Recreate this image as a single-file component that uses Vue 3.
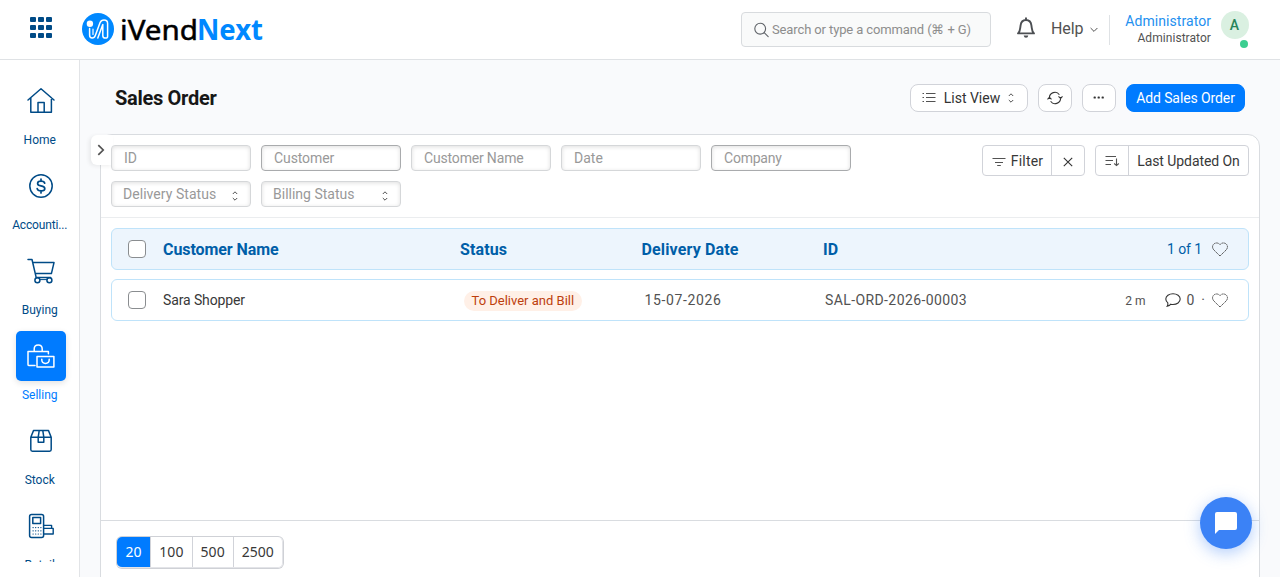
<script setup>
const modules = [
  { name: 'Home', icon: 'home', ls: 0 },
  { name: 'Accounti...', icon: 'coin', ls: -0.15 },
  { name: 'Buying', icon: 'cart', ls: 0 },
  { name: 'Selling', icon: 'bags', ls: 0, active: true },
  { name: 'Stock', icon: 'box', ls: 0 },
  { name: 'Retail', icon: 'pos', ls: 0.1 },
]
const fields = [
  { label: 'ID' },
  { label: 'Customer', link: true, ls: -0.1 },
  { label: 'Customer Name', ls: -0.17 },
  { label: 'Date' },
  { label: 'Company', link: true, ls: -0.22 },
  { label: 'Delivery Status', select: true, ls: 0.05 },
  { label: 'Billing Status', select: true },
]
const sizes = ['20', '100', '500', '2500']
const px = (n) => ({ letterSpacing: (n || 0) + 'px' })
</script>

<template>
  <div class="app">
    <header class="topbar">
      <div class="grid-icon"><i v-for="n in 9" :key="n"></i></div>
      <svg class="logo" width="190" height="40" viewBox="0 0 190 40">
        <circle cx="16" cy="16" r="16" fill="#0088ff" />
        <circle cx="7.9" cy="10.8" r="3.2" fill="#fff" />
        <path d="M7.6 15.4V22Q7.6 25 10.2 25Q12.4 25 13.4 22.3L18 9.8Q19.2 7 22 7Q25.6 7 25.6 10.4V23.4Q25.6 25 23.4 25Q20.8 25 20.8 22.4V11.6L15.8 25" fill="none" stroke="#fff" stroke-width="1.5" stroke-linecap="round" stroke-linejoin="round" />
        <path d="M11 16V21.4" fill="none" stroke="#fff" stroke-width="1.2" stroke-linecap="round" />
        <text x="38" y="26.6" class="logo-a" textLength="78" lengthAdjust="spacingAndGlyphs">iVend</text>
        <text x="115" y="26.6" class="logo-b" textLength="66" lengthAdjust="spacingAndGlyphs">Next</text>
      </svg>
      <div class="search">
        <svg width="16" height="16" viewBox="0 0 16 16" fill="none" stroke="#5f6368" stroke-width="1.1"><circle cx="6.2" cy="6.7" r="5.4" /><path d="M10.2 10.6L14.2 14.6" stroke-linecap="round" /></svg>
        <span>Search or type a command (⌘ + G)</span>
      </div>
      <svg class="bell" width="20" height="22" viewBox="0 0 20 22" fill="none" stroke="#4c4f53" stroke-width="1.9"><path d="M10 .6V3M2 16.4H18C16.4 15 16 13.4 15.8 11.2L15.4 8.4C15 5 12.8 3 10 3S5 5 4.6 8.4L4.2 11.2C4 13.4 3.6 15 2 16.4Z" stroke-linejoin="round" /><path d="M7.7 18.5H12.3Q12 20.8 10 20.8T7.7 18.5Z" fill="#4c4f53" stroke="none" /></svg>
      <span class="help">Help</span>
      <svg class="chev" width="8" height="6" viewBox="0 0 8 6" fill="none" stroke="#525252"><path d="M.6 1L4 4.4L7.4 1" /></svg>
      <div class="sep"></div>
      <div class="user"><div class="u1">Administrator</div><div class="u2">Administrator</div></div>
      <div class="avatar">A<i class="online"></i></div>
    </header>

    <div class="body">
      <aside class="side">
        <div class="side-scroll">
          <div v-for="m in modules" :key="m.name" class="mod" :class="{ active: m.active }">
            <div class="mod-icon">
              <svg width="28" height="28" viewBox="0 0 28 28" fill="none" stroke="currentColor" stroke-width="1.5" stroke-linejoin="round" stroke-linecap="round">
                <g v-if="m.icon === 'home'"><path d="M1 13L14 1.8L27 13M3.8 10.8V25.2H24.4V10.8M11 25V15.4H17.2V25" /></g>
                <g v-if="m.icon === 'coin'"><circle cx="14" cy="14" r="11.2" /><path d="M17.7 11.2Q17.2 9.2 14 9.2Q10.6 9.2 10.6 11.4Q10.6 13.3 14 13.9Q17.8 14.6 17.8 16.7Q17.8 18.9 14.2 18.9Q10.6 18.9 10.2 16.7M14 7V9.2M14 18.9V21" stroke-width="1.7" /></g>
                <g v-if="m.icon === 'cart'"><path d="M1 2.5H5L9.2 20.6H23.6M6 5.6H27L24.4 16.6H8.4" /><circle cx="10.4" cy="23.2" r="2.5" /><circle cx="22.4" cy="23.2" r="2.5" /><path d="M13 22.6H20" stroke-width="1" /></g>
                <g v-if="m.icon === 'bags'" transform="translate(0 1)"><path d="M8 22.6H2.2Q1 22.6 1 21.4V8.6H21.4V10.8M7.2 8.4V6Q7.2 2 11.2 2T15.2 6V8.4M10 13.4H26.9V24H10Z" /><path d="M14.8 16.2V17Q15 20.4 18.5 20.4T22.2 17V16.2" /></g>
                <g v-if="m.icon === 'box'"><path d="M3.8 10.2L6.6 3.4H21.4L24.2 10.2V22.6Q24.2 24.2 22.6 24.2H5.4Q3.8 24.2 3.8 22.6ZM3.8 10.2H24.2M11.2 10.2V15.2H16.8V10.2L15.8 3.6M11.2 10.2L12.2 3.6" /></g>
                <g v-if="m.icon === 'pos'"><rect x="2.6" y="2.4" width="14" height="23" rx="2" /><rect x="5.8" y="5.6" width="7.8" height="6" /><path d="M6 15.6H14M6 18.8H14M6 22H14" stroke-width="1.2" stroke-dasharray=".2 2.4" /><path d="M17 13.4H24.6V16.2M17 16.4H26.2V22H17" stroke-width="1.4" /></g>
              </svg>
            </div>
            <div class="mod-name" :style="px(m.ls)">{{ m.name }}</div>
          </div>
        </div>
      </aside>

      <main class="main">
        <div class="page-head">
          <h1>Sales Order</h1>
          <div class="btn list-view">
            <svg width="14" height="12" viewBox="0 0 14 12" fill="none" stroke="#525252" stroke-width="1.1"><path d="M4 1.5H13.5M4 5.5H13.5M4 9.5H13.5M.5 1.5H2M.5 5.5H2M.5 9.5H2" /></svg>
            <span>List View</span>
            <svg width="6" height="10" viewBox="0 0 6 10" fill="none" stroke="#525252"><path d="M.8 3L3 .8L5.2 3M.8 7L3 9.2L5.2 7" /></svg>
          </div>
          <div class="btn sq"><svg width="16" height="14" viewBox="0 0 16 14" fill="none" stroke="#333" stroke-width="1.1"><path d="M2.4 8V7A5.5 5.5 0 0 1 12.4 3.7M13.6 6V7A5.5 5.5 0 0 1 3.6 10.3M.5 8.4L2.4 6.4L4.5 8.4M11.5 5.4L13.6 7.4L15.5 5.4" /></svg></div>
          <div class="btn sq"><svg class="dots" width="12" height="3" viewBox="0 0 12 3" fill="#333"><rect x=".6" y=".4" width="2.2" height="2.2" rx=".7" /><rect x="4.6" y=".4" width="2.2" height="2.2" rx=".7" /><rect x="8.6" y=".4" width="2.2" height="2.2" rx=".7" /></svg></div>
          <div class="btn primary">Add Sales Order</div>
        </div>

        <div class="card">
          <div class="toggle"><svg width="8" height="12" viewBox="0 0 8 12" fill="none" stroke="#525252" stroke-width="1.7"><path d="M1.3 1.2L6.2 6L1.3 10.8" /></svg></div>
          <section class="filters">
            <div class="fields">
              <div v-for="f in fields" :key="f.label" class="field" :class="{ link: f.link, select: f.select }">
                <span :style="px(f.ls)">{{ f.label }}</span>
                <svg v-if="f.select" width="6" height="10" viewBox="0 0 6 10" fill="none" stroke="#525252"><path d="M.8 3L3 .8L5.2 3M.8 7L3 9.2L5.2 7" /></svg>
              </div>
            </div>
            <div class="group filter">
              <div><svg width="14" height="10" viewBox="0 0 14 10" stroke="#525252" stroke-width="1.1"><path d="M.5 1.5H13.5M3 5.5H11M5.2 8.5H8.8" /></svg><span class="ft">Filter</span></div>
              <div><svg class="x" width="10" height="10" viewBox="0 0 10 10" stroke="#333" stroke-width="1.1"><path d="M.8 .8L9.2 9.2M9.2 .8L.8 9.2" /></svg></div>
            </div>
            <div class="group sort">
              <div><svg width="15" height="12" viewBox="0 0 15 12" fill="none" stroke="#525252" stroke-width="1.1"><path d="M.5 1.5H11M.5 5.5H8M.5 9.5H6M11.5 3.5V10M9.2 8.5L11.5 10.6L13.8 8.5" /></svg></div>
              <div class="lu">Last Updated On</div>
            </div>
          </section>

          <section class="list">
            <div class="row head">
              <i class="check"></i><b class="h1">Customer Name</b><b class="h2">Status</b><b class="h3">Delivery Date</b><b>ID</b>
              <div class="tail"><span class="count">1 of 1</span>
                <svg class="heart" width="16" height="15" viewBox="0 0 16 15" fill="none" stroke="#444" stroke-width=".9" stroke-dasharray="1.7 .5"><path d="M8 14L1.7 7.8Q-.4 5 1.3 2.6Q2.7 .8 5 1Q7 1.2 8 2.7Q9 1.2 11 1Q13.3 .8 14.7 2.6Q16.4 5 14.3 7.8Z" /></svg></div>
            </div>
            <div class="row">
              <i class="check"></i><span class="name">Sara Shopper</span><span><span class="pill">To Deliver and Bill</span></span><span class="date">15-07-2026</span><span class="so">SAL-ORD-2026-00003</span>
              <div class="tail"><span class="ago">2 m</span>
                <svg class="bubble" width="16" height="14" viewBox="0 0 16 14" fill="none" stroke="#333" stroke-width="1.1"><path d="M8 .7C12 .7 15.2 3 15.2 6.1S12 11.5 8 11.5Q6.9 11.5 5.8 11.2Q4.6 12.8 2.2 13.2Q3.2 11.8 2.8 9.9Q.8 8.4 .8 6.1C.8 3 4 .7 8 .7Z" /></svg>
                <span class="zero">0</span><span class="dot">·</span>
                <svg class="heart" width="16" height="15" viewBox="0 0 16 15" fill="none" stroke="#444" stroke-width=".9" stroke-dasharray="1.7 .5"><path d="M8 14L1.7 7.8Q-.4 5 1.3 2.6Q2.7 .8 5 1Q7 1.2 8 2.7Q9 1.2 11 1Q13.3 .8 14.7 2.6Q16.4 5 14.3 7.8Z" /></svg></div>
            </div>
          </section>

          <footer class="paging"><div class="pager"><span v-for="s in sizes" :key="s" :class="{ on: s === '20' }">{{ s }}</span></div></footer>
        </div>
      </main>
    </div>
    <div class="chat"><svg width="22" height="22" viewBox="0 0 22 22" fill="#fff"><path d="M2 0H20Q22 0 22 2V16Q22 18 20 18H4L0 22V2Q0 0 2 0Z" /></svg></div>
  </div>
</template>

<style>
body { overflow: hidden; }
</style>
<style scoped>
* { box-sizing: border-box; }
svg { display: block; flex: none; overflow: visible; }
.app { width: 1280px; height: 577px; overflow: hidden; display: flex; flex-direction: column; font: 14px/20px Roboto, "Noto Sans", sans-serif; color: #383838; background: #f9fafc; white-space: nowrap; position: relative; }
.topbar { height: 60px; flex: none; background: #fff; border-bottom: 1px solid #dfe2e5; display: flex; align-items: flex-start; }
.grid-icon { margin: 17px 0 0 30px; display: grid; grid-template-columns: repeat(3, 6px); grid-auto-rows: 5px; gap: 3px 2px; }
.grid-icon i { background: #004b87; border-radius: 1px; }
.logo { margin: 13px 0 0 30px; }
.logo text { font-size: 28px; font-family: "Noto Sans", sans-serif; }
.logo .logo-a { font-weight: 400; fill: #000; stroke: #000; stroke-width: .5; }
.logo .logo-b { font-weight: 700; fill: #0088ff; }
.search { margin: 12px 0 0 469px; width: 250px; height: 35px; border: 1px solid #d8dbde; border-radius: 4px; background: #f9fafa; display: flex; align-items: center; padding-left: 12px; gap: 2px; color: #8d8d8d; font-size: 13px; letter-spacing: -0.12px; }
.search span { padding-top: 1px; }
.bell { margin: 17px 0 0 25px; }
.help { margin: 19px 0 0 15px; font-size: 16px; color: #525252; letter-spacing: -0.07px; }
.chev { margin: 27px 0 0 6px; }
.sep { margin: 15px 0 0 11px; width: 1px; height: 30px; background: #dfe2e5; }
.user { width: 101.5px; margin-top: 12px; text-align: right; }
.u1 { color: #2490ef; font-size: 14px; line-height: 18px; letter-spacing: .06px; }
.u2 { color: #525252; font-size: 12px; line-height: 16px; letter-spacing: .06px; }
.avatar { margin: 11px 0 0 9.5px; width: 28px; height: 28px; border-radius: 50%; background: #daf0e1; color: #26845a; font-weight: 500; text-align: center; line-height: 29px; position: relative; }
.online { position: absolute; left: 19px; top: 29px; width: 8px; height: 8px; border-radius: 50%; background: #3bce90; }
.body { flex: 1; display: flex; min-height: 0; }
.side { width: 80px; flex: none; background: #fff; border-right: 1px solid #e2e4e7; }
.side-scroll { height: 502px; overflow: hidden; padding-top: 16px; }
.mod { height: 85px; color: #004b87; }
.mod-icon { width: 50px; height: 50px; margin-left: 16px; border-radius: 5px; display: flex; align-items: center; justify-content: center; padding-right: 1px; }
.mod-name { font-size: 12px; line-height: 18px; margin-top: 5px; text-align: center; padding-left: .5px; }
.active { color: #007bff; }
.active .mod-icon { background: #007bff; color: #fff; box-shadow: 0 2px 6px rgba(0, 0, 0, .12); }
.main { flex: 1; padding: 24px 20px 0; display: flex; flex-direction: column; min-width: 0; }
.page-head { height: 50px; flex: none; padding: 0 15px; display: flex; align-items: flex-start; gap: 10px; }
h1 { margin: 0 auto 0 0; font-size: 20px; line-height: 29px; font-weight: 700; color: #171717; letter-spacing: -0.29px; }
.btn { height: 28px; border: 1px solid #d1d3d9; border-radius: 8px; background: #fff; display: flex; align-items: center; justify-content: center; }
.list-view { width: 118px; gap: 8px; letter-spacing: -0.02px; color: #333; padding-right: 2px; }
.sq { width: 34px; }
.dots { margin-bottom: 2px; }
.primary { width: 119px; background: #007bff; border-color: #007bff; color: #fff; letter-spacing: -0.1px; }
.card { position: relative; height: 480px; border: 1px solid #d9dce0; border-radius: 12px; background: #fff; flex: none; }
.toggle { position: absolute; left: -10px; top: 0; width: 22px; height: 30px; border-radius: 6px 0 0 6px; background: #fff; box-shadow: -2px 1px 4px rgba(0, 0, 0, .07); display: flex; align-items: center; padding-left: 6px; }
.filters { position: relative; height: 83px; border-bottom: 1px solid #ebedef; padding: 10px; display: flex; align-items: flex-start; }
.fields { display: flex; flex-wrap: wrap; gap: 10px; width: 750px; margin-right: auto; }
.field { width: 140px; height: 26px; border: 1px solid #d5d7d9; border-radius: 4px; box-shadow: inset 0 1px 4px rgba(0, 0, 0, .13); background: #fff; color: #999; padding: 0 12px; display: flex; align-items: center; justify-content: space-between; }
.field.link { border-color: #a9abad; }
.field.select { padding-left: 11px; }
.field svg { margin-top: 3px; }
.group { height: 31px; border: 1px solid #d1d3d9; border-radius: 4px; display: flex; background: #fff; margin-left: 10px; }
.group > div { display: flex; align-items: center; justify-content: center; }
.group > div + div { border-left: 1px solid #d1d3d9; }
.filter { width: 103px; }
.filter > div:first-child { width: 68px; gap: 5px; padding-left: 1px; }
.filter > div:last-child { flex: 1; }
.filter svg { margin-top: 3px; }
.ft { letter-spacing: .2px; }
.sort { width: 154px; }
.sort > div:first-child { width: 32px; }
.sort .lu { flex: 1; letter-spacing: -0.07px; }
.list { height: 302px; padding: 10px; display: flex; flex-direction: column; gap: 9px; }
.row { height: 42px; border: 1px solid #bfe3fa; border-radius: 6px; display: grid; grid-template-columns: 35px 297px 181.5px 181.5px 1fr auto; align-items: center; padding: 0 20px 0 16px; }
.head { background: #edf5fd; color: #005ea8; }
.head b { font-size: 16px; padding-top: 1px; }
.h1 { letter-spacing: -0.08px; }
.h2 { letter-spacing: .1px; }
.h3 { letter-spacing: .14px; }
.check { width: 18px; height: 18px; border: 1px solid #8a8d90; border-radius: 4px; background: #fff; }
.name { letter-spacing: -0.12px; }
.pill { display: inline-block; margin-left: 4px; height: 20px; line-height: 20px; padding: 0 8px 0 7.5px; border-radius: 10px; background: #fff0e7; color: #bd3e0c; font-size: 13px; vertical-align: middle; }
.date { padding-left: 3px; letter-spacing: .63px; color: #525252; }
.so { padding-left: 2px; letter-spacing: .4px; color: #525252; }
.tail { display: flex; align-items: center; color: #525252; }
.count { color: #005ea8; letter-spacing: -0.1px; margin-right: 10px; }
.ago { font-size: 12px; margin-right: 20px; padding-top: 1px; }
.zero { margin-left: 5px; }
.dot { margin: 0 7px 0 7px; }
.heart { margin-top: 1px; }
.paging { border-top: 1px solid #d9dce0; padding: 16px 16px 0; display: flex; }
.pager { box-shadow: 0 0 0 1px #cfd1d6; border: 1px solid #e3e4e8; border-width: 0 1px 1px 0; border-radius: 5px; display: flex; height: 31px; width: 166px; font-family: "Noto Sans", sans-serif; overflow: hidden; }
.pager span { line-height: 30px; text-align: center; width: 41px; flex: 1 1 auto; border-left: 1px solid #d1d3d9; }
.pager span:last-child { width: 49px; }
.pager .on { width: 33px; background: #007bff; color: #fff; border-left: 0; }
.chat { position: absolute; left: 1200px; top: 497px; width: 52px; height: 52px; border-radius: 50%; background: #3b82f6; box-shadow: 0 4px 16px rgba(59, 130, 246, .4); display: flex; align-items: center; justify-content: center; }
</style>
